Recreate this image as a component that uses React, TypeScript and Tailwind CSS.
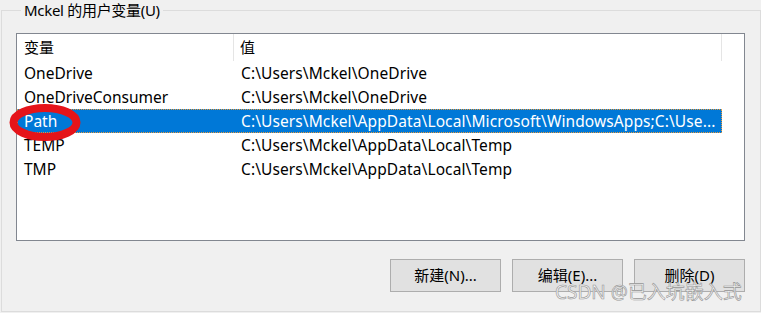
const font = { fontFamily: '"Noto Sans", "Noto Sans CJK SC", sans-serif' }

const rows = [
  { name: 'OneDrive', value: 'C:\\Users\\Mckel\\OneDrive' },
  { name: 'OneDriveConsumer', value: 'C:\\Users\\Mckel\\OneDrive' },
  { name: 'Path', value: 'C:\\Users\\Mckel\\AppData\\Local\\Microsoft\\WindowsApps;C:\\Use...', selected: true },
  { name: 'TEMP', value: 'C:\\Users\\Mckel\\AppData\\Local\\Temp' },
  { name: 'TMP', value: 'C:\\Users\\Mckel\\AppData\\Local\\Temp' },
]

export default function App() {
  return (
    <div
      className="relative w-[761px] h-[313px] overflow-hidden bg-[#f0f0f0] text-[15px] text-black"
      style={font}
    >
      <fieldset className="ml-[1px] w-[760px] h-[312px] border border-[#dcdcdc] pl-[14px]">
        <legend className="ml-[5px] px-[3px] leading-[20px] tracking-[-0.3px]">Mckel 的用户变量(U)</legend>

        {/* List view */}
        <div className="mt-[13px] w-[729px] h-[208px] border border-[#828790] bg-white">
          <div className="flex h-[27px] items-center">
            <div className="w-[217px] h-full pl-[7px] flex items-center border-r border-[#e5e5e5]">变量</div>
            <div className="w-[488px] h-full pl-[6px] flex items-center border-r border-[#e5e5e5]">值</div>
          </div>
          {rows.map((r) => (
            <div key={r.name} className="flex h-[24px] text-[15.5px]">
              <div
                className={`flex w-[705px] items-center pt-[1px] ${
                  r.selected ? 'bg-[#0078d7] text-white outline outline-1 outline-dotted outline-[#e99a3a] -outline-offset-1' : ''
                }`}
              >
                <div className="w-[217px] pl-[7px] whitespace-nowrap">{r.name}</div>
                <div className="pl-[7px] whitespace-nowrap tracking-[0.1px]">{r.value}</div>
              </div>
            </div>
          ))}
        </div>

        {/* Buttons */}
        <div className="mt-[18px] w-[729px] flex justify-end gap-[11px]">
          {['新建(N)...', '编辑(E)...', '删除(D)'].map((b) => (
            <button
              key={b}
              type="button"
              className="w-[111px] h-[33px] border border-[#adadad] bg-[#e1e1e1] flex items-center justify-center"
            >
              {b}
            </button>
          ))}
        </div>
      </fieldset>

      {/* Red annotation circle */}
      <svg className="absolute left-[9px] top-[104px]" width="72" height="37" viewBox="0 0 72 37">
        <ellipse cx="36" cy="18.5" rx="31.5" ry="14.5" fill="none" stroke="#e5141a" strokeWidth="8" />
      </svg>

      {/* Watermark */}
      <div className="absolute left-[555px] top-[280px] text-[19px] leading-[24px] whitespace-nowrap text-[#f4f4f4] [-webkit-text-stroke:0.6px_#959595]">
        CSDN @已入坑嵌入式
      </div>
    </div>
  )
}
